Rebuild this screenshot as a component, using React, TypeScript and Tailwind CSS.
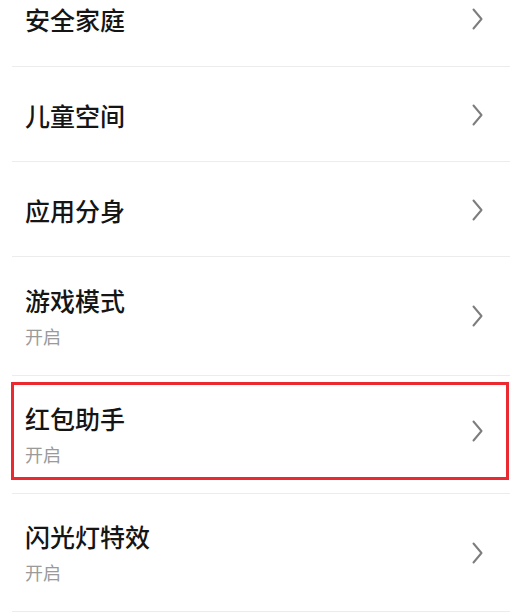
import React from "react";

const Chevron = () => (
  <svg width="11" height="22" viewBox="0 0 11 22" fill="none" className="shrink-0">
    <polyline points="1.5,1.5 9.5,11 1.5,20.5" stroke="#7d7d7d" strokeWidth="2" strokeLinecap="round" strokeLinejoin="round" />
  </svg>
);

const font = { fontFamily: '"Noto Sans CJK SC", "Noto Sans", sans-serif' };

function TextBlock({ title, sub }: { title: string; sub?: string }) {
  return (
    <div className="flex flex-col">
      <div className="text-[25px] leading-[34px] font-medium text-[#151515]">{title}</div>
      {sub && <div className="mt-[5px] text-[18px] leading-[28px] text-[#9a9a9a]">{sub}</div>}
    </div>
  );
}

export default function App() {
  return (
    <div className="w-[520px] h-[615px] bg-white overflow-hidden" style={font}>
      <div className="ml-[12px] w-[498px] flex flex-col">
        <div className="h-[67px] pb-[28px] pl-[13px] pr-[27px] flex items-center justify-between border-b border-[#ececec]">
          <TextBlock title="安全家庭" />
          <Chevron />
        </div>
        <div className="h-[95px] pl-[13px] pr-[27px] pt-[2px] flex items-center justify-between border-b border-[#ececec]">
          <TextBlock title="儿童空间" />
          <Chevron />
        </div>
        <div className="h-[95px] pl-[13px] pr-[27px] pt-[2px] flex items-center justify-between border-b border-[#ececec]">
          <TextBlock title="应用分身" />
          <Chevron />
        </div>
        <div className="h-[119px] pl-[13px] pr-[27px] flex items-center justify-between border-b border-[#ececec]">
          <TextBlock title="游戏模式" sub="开启" />
          <Chevron />
        </div>
        <div className="h-[118px] pt-[6px] border-b border-[#ececec]">
          <div className="-ml-px mr-px h-[98px] border-[3px] border-[#ea2a30] pl-[11px] pr-[23px] pt-[6px] flex items-center justify-between">
            <TextBlock title="红包助手" sub="开启" />
            <div className="-mt-[6px]">
              <Chevron />
            </div>
          </div>
        </div>
        <div className="h-[118px] pl-[13px] pr-[27px] flex items-center justify-between border-b border-[#ececec]">
          <TextBlock title="闪光灯特效" sub="开启" />
          <Chevron />
        </div>
      </div>
    </div>
  );
}
